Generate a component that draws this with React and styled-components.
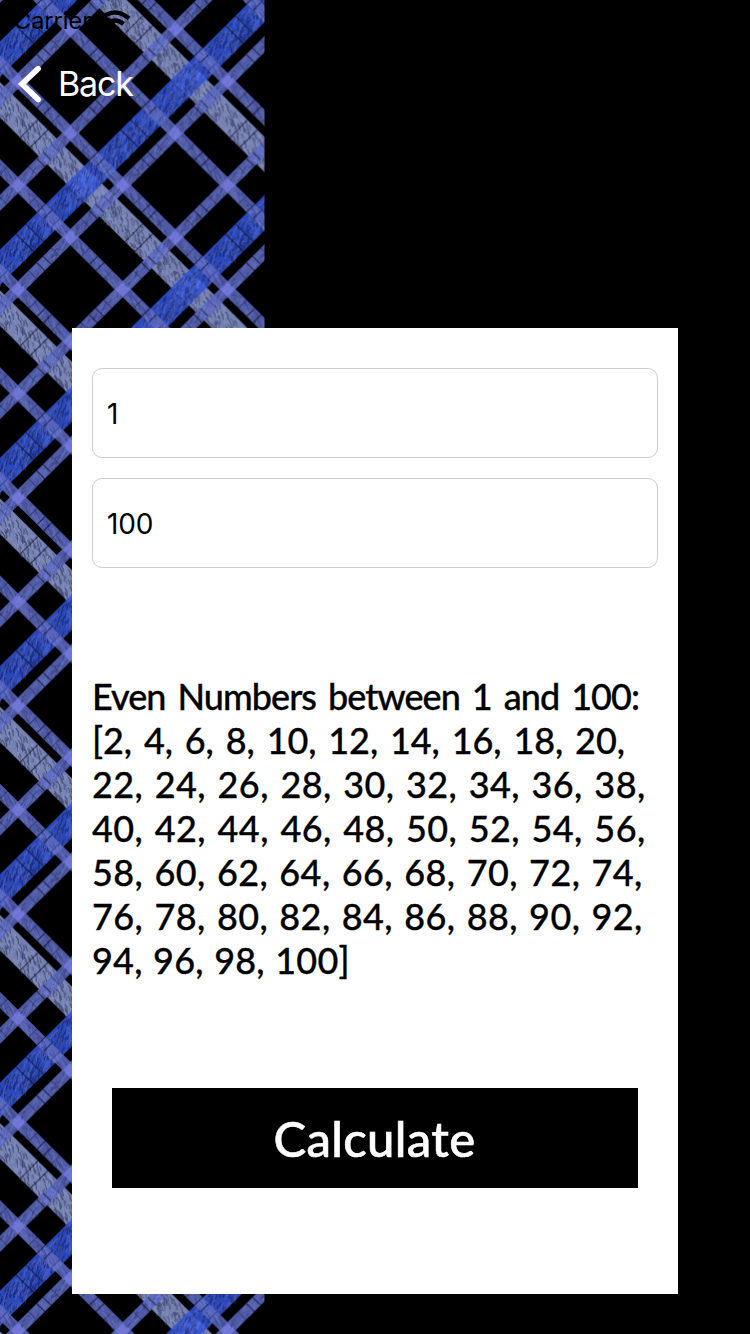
import React from 'react';
import styled, { createGlobalStyle } from 'styled-components';

const Global = createGlobalStyle`
  * { box-sizing: border-box; }
  body { margin: 0; background: #000; }
`;

const Screen = styled.main`
  position: relative;
  width: 750px;
  height: 1334px;
  overflow: hidden;
  background: #000;
  display: flex;
  flex-direction: column;
`;

const PlaidArt = styled.svg`
  position: absolute;
  left: 0;
  top: 0;
`;

const StatusBar = styled.div`
  position: relative;
  height: 40px;
  padding: 1px 0 0 14px;
  display: flex;
  align-items: center;
  gap: 8px;
  color: #000;
  font: 400 23.5px/40px Inter, sans-serif;
`;

const NavBar = styled.nav`
  position: relative;
  height: 88px;
  padding-left: 17px;
  display: flex;
  align-items: center;
`;

const BackButton = styled.button`
  border: 0;
  padding: 0;
  background: none;
  color: #fff;
  display: flex;
  align-items: center;
  gap: 15px;
  font: 400 34px/42px Inter, sans-serif;
  letter-spacing: -1.2px;
`;

const Card = styled.section`
  position: relative;
  margin: 200px 72px 0;
  height: 966px;
  padding: 40px 20px 0;
  background: #fff;
  display: flex;
  flex-direction: column;
`;

const Field = styled.input`
  display: block;
  width: 100%;
  height: 90px;
  margin-bottom: 20px;
  padding: 1px 14px 0;
  border: 1px solid #cdcdcd;
  border-radius: 10px;
  background: #fff;
  color: #000;
  font: 400 28px Inter, sans-serif;
  letter-spacing: -0.2px;
  outline: 0;
`;

const Result = styled.p`
  margin: 86px 0 0;
  height: 308px;
  color: #000;
  font: 500 36px/44px Lato, sans-serif;
  -webkit-text-stroke: 0.3px #000;
`;

const Line = styled.span`
  display: block;
  white-space: nowrap;
  letter-spacing: ${(p) => p.$track}px;
  word-spacing: ${(p) => p.$gap}px;
`;

const Calculate = styled.button`
  margin: 106px 20px 0;
  height: 100px;
  border: 0;
  padding: 0 1px 0 0;
  background: #000;
  color: #fff;
  font: 500 49px/100px Lato, sans-serif;
  letter-spacing: 0.3px;
  -webkit-text-stroke: 0.6px #fff;
`;

// One repeat of the weave, and the distance between crossings along a band.
const PW = 209.6;
const PH = 208.2;
const S = 73.86;
const REPEAT = S * 4;

const noise = (n) => {
  const v = Math.sin(n * 127.1 + 11.7) * 43758.5453;
  return v - Math.floor(v);
};

// Short yarn strokes scattered along one band, in the band's own axes.
const yarn = (width, seed, slant) => {
  let d = '';
  const count = width > 15 ? 330 : 120;
  for (let i = 0; i < count; i++) {
    const x = noise(seed + i) * REPEAT;
    const y = (noise(seed + i * 3 + 0.5) - 0.5) * (width - 3);
    const l = 3 + noise(seed + i * 7) * 6;
    const stroke = `l${(l / 2).toFixed(1)} ${(l * slant * 0.2).toFixed(1)}l${(l / 2).toFixed(1)} ${(l * slant * 0.8).toFixed(1)}`;
    [x - REPEAT, x, x + REPEAT].forEach((px) => {
      if (px > -90 && px < REPEAT + 90) d += `M${px.toFixed(1)} ${y.toFixed(1)}${stroke}`;
    });
  }
  return d;
};

const seams = (width, offset, step, gap) => {
  let d = '';
  for (let x = offset - step; x < REPEAT + 90; x += step) {
    d += `M${x - gap / 2} ${-width / 2}v${width}M${x + gap / 2} ${-width / 2}v${width}`;
  }
  return d;
};

const Band = ({ width, color, seed, slant }) => {
  const wide = width > 15;
  return (
    <g>
      <rect x="-90" y={-width / 2} width={REPEAT + 180} height={width} fill={color} />
      <path d={yarn(width, seed, slant)} stroke="#0a0e30" strokeOpacity={wide ? 0.42 : 0.25} strokeWidth="1.2" fill="none" />
      <path d={yarn(width, seed + 500, slant)} stroke="#a8b4ff" strokeOpacity="0.22" strokeWidth="1.2" fill="none" />
      <path
        d={wide ? seams(width, 42, S * 2, 14) : seams(width, 4.5, S, 9)}
        stroke="#05071c"
        strokeOpacity="0.55"
        strokeWidth="1.3"
        fill="none"
      />
      {!wide && <path d={seams(width, 4.5, S, 32)} stroke="#05071c" strokeOpacity="0.3" strokeWidth="1.2" fill="none" />}
    </g>
  );
};

const Down = ({ c, ...rest }) => (
  <g>
    {[c - 2 * PW, c - PW, c, c + PW].map((x) => (
      <g key={x} transform={`matrix(.70948 .70472 -.70711 .70711 ${x} 0)`}><Band {...rest} /></g>
    ))}
  </g>
);

const Up = ({ c, ...rest }) => (
  <g>
    {[c - PW, c, c + PW, c + 2 * PW].map((x) => (
      <g key={x} transform={`matrix(-.70948 .70472 -.70711 -.70711 ${x} 0)`}><Band {...rest} /></g>
    ))}
  </g>
);

const thin = '#5c69c4';

const Plaid = () => {
  const nodes = [];
  for (let j = -2; j < 5; j++) {
    for (let i = -1; i < 5; i++) {
      if ((i + j) % 2 === 0) nodes.push([18 + (i * PW) / 4, 81.5 + (j * PH) / 4]);
    }
  }
  return (
    <PlaidArt width="265" height="1334" viewBox="0 0 265 1334">
      <defs>
        <pattern id="plaid" width={PW} height={PH} patternUnits="userSpaceOnUse">
          <Down c={109} width={25} color="#7480ae" seed={3} slant={0.5} />
          <g opacity="0.87"><Up c={59.5} width={25} color="#3152d6" seed={90} slant={-0.5} /></g>
          <g opacity="0.86">
            <Down c={41.2} width={11.5} color={thin} seed={210} slant={0.3} />
            <Down c={146} width={11.5} color={thin} seed={340} slant={0.3} />
          </g>
          <g opacity="0.86">
            <Up c={99.5} width={11.5} color={thin} seed={470} slant={-0.3} />
            <Up c={204.3} width={11.5} color={thin} seed={600} slant={-0.3} />
          </g>
          {nodes.map(([x, y]) => (
            <path key={`${x} ${y}`} d={`M${x} ${y - 7}l7 7l-7 7l-7 -7z`} fill="#7e80e8" fillOpacity="0.6" />
          ))}
        </pattern>
        <filter id="soft" x="0" y="0" width="1" height="1"><feGaussianBlur stdDeviation="0.7" /></filter>
      </defs>
      <rect width="265" height="1334" fill="#000" />
      <rect width="264.5" height="1334" fill="url(#plaid)" filter="url(#soft)" />
    </PlaidArt>
  );
};

const WifiIcon = () => (
  <svg width="32" height="26" viewBox="0 0 32 26" fill="none" stroke="#000" strokeWidth="4.4">
    <path d="M2 10.5Q16 -1.5 30 10.5M7.5 16Q16 9 24.5 16" />
    <path d="M11.5 19.5Q16 16 20.5 19.5L16 24Z" fill="#000" stroke="none" />
  </svg>
);

const Chevron = () => (
  <svg width="26" height="40" viewBox="0 0 26 40" fill="none" stroke="#fff" strokeWidth="5.6" strokeLinecap="round" strokeLinejoin="miter">
    <path d="M21.2 4.6L5 20L21.2 35.6" />
  </svg>
);

const lines = [
  ['Even Numbers between 1 and 100:', -0.95, 3.8],
  ['[2, 4, 6, 8, 10, 12, 14, 16, 18, 20,', -0.1, 3],
  ['22, 24, 26, 28, 30, 32, 34, 36, 38,', 0.4, 2.1],
  ['40, 42, 44, 46, 48, 50, 52, 54, 56,', 0.4, 2.1],
  ['58, 60, 62, 64, 66, 68, 70, 72, 74,', 0.4, 1.75],
  ['76, 78, 80, 82, 84, 86, 88, 90, 92,', 0.4, 1.75],
  ['94, 96, 98, 100]', 0.2, 1.2],
];

export default function App() {
  return (
    <Screen>
      <Global />
      <Plaid />
      <StatusBar>Carrier<WifiIcon /></StatusBar>
      <NavBar><BackButton><Chevron />Back</BackButton></NavBar>
      <Card>
        <Field defaultValue="1" />
        <Field defaultValue="100" />
        <Result>
          {lines.map(([text, track, gap]) => <Line key={text} $track={track} $gap={gap}>{text}</Line>)}
        </Result>
        <Calculate>Calculate</Calculate>
      </Card>
    </Screen>
  );
}
